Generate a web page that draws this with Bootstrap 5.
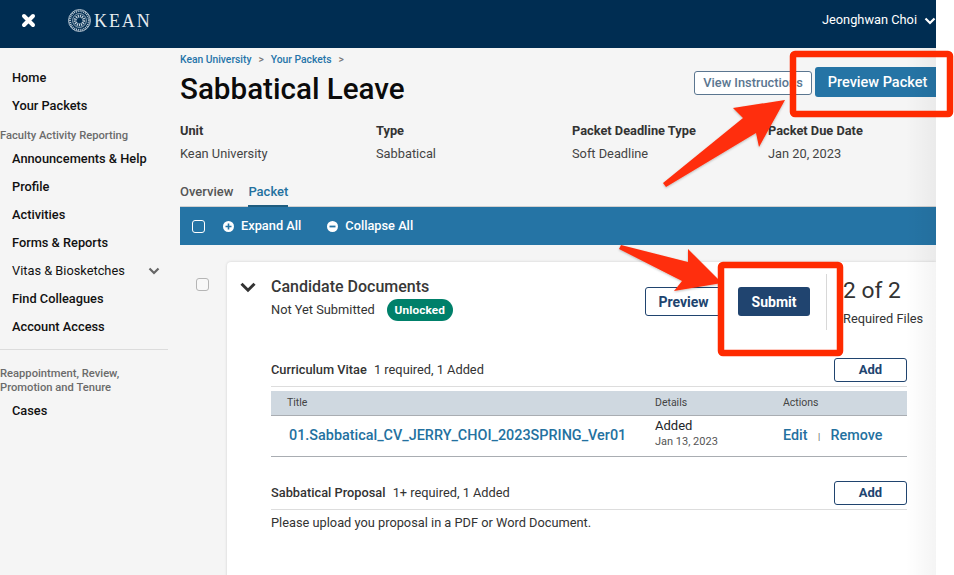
<!DOCTYPE html>
<html lang="en">

<head>
  <meta charset="UTF-8" />
  <meta name="viewport" content="width=device-width, initial-scale=1.0" />
  <title>Sabbatical Leave - Packet</title>
  <link href="https://cdn.jsdelivr.net/npm/bootstrap@5.3.3/dist/css/bootstrap.min.css" rel="stylesheet" />
  <style>
    html, body { height: 100%; overflow: hidden; background: #fff; }

    body {
      font-family: Roboto, "Liberation Sans", sans-serif;
      font-size: 12.8px;
      line-height: 16px;
      color: #333;
    }

    .app-shell {
      width: 936px;
      height: 575px;
      overflow: hidden;
      background: #f5f5f5;
      position: relative;
    }

    .edge-fade {
      position: absolute;
      top: 48px;
      right: 0;
      bottom: 0;
      width: 30px;
      background: linear-gradient(to right, rgba(0, 0, 0, 0), rgba(0, 0, 0, .045));
      pointer-events: none;
    }

    .top-bar { height: 48px; background: #002d52; padding: 0 0 7px 21px; color: #fff; }
    .brand-name { font-family: "Liberation Serif", serif; font-size: 18px; letter-spacing: 1.9px; color: #e6ebef; margin-left: 3px; line-height: 24px; }
    .seal { margin-left: 32px; }
    .user-name { font-size: 12.8px; margin-right: 7px; margin-top: -2px; }

    .side-nav { width: 168px; padding-top: 16px; flex-shrink: 0; }
    .side-link {
      display: flex;
      align-items: center;
      justify-content: space-between;
      height: 28px;
      padding: 0 8px 0 12px;
      color: #111;
      font-size: 12.8px;
      font-weight: 500;
      text-decoration: none;
    }
    .side-head { font-size: 11.2px; line-height: 14px; font-weight: 500; color: #6b6b6b; }
    .side-head-first { margin: 9px 0 2px; }
    .side-rule { margin: 8px 0 17px; border-top: 1px solid #dcdcdc; opacity: 1; }
    .side-link-last { margin-top: 2px; }

    .main-col { width: 756px; margin-left: 12px; flex-shrink: 0; }

    .crumbs { margin: 5px 0 0; font-size: 10.3px; line-height: 13px; font-weight: 500; --bs-breadcrumb-divider: ">"; --bs-breadcrumb-margin-bottom: 0; --bs-breadcrumb-item-padding-x: 7px; }
    .crumbs a { color: #2574a9; text-decoration: none; }
    .crumbs .breadcrumb-item + .breadcrumb-item::before { color: #777; }
    .page-title { font-size: 29.6px; line-height: 36px; font-weight: 500; color: #0b0b0b; margin: 5px 0 0; }

    .head-actions { margin-top: 19px; }
    .btn-outline-slate { border: 1px solid #5b7690; background: #fff; color: #5b7690; font-size: 12.8px; font-weight: 500; height: 24px; width: 118px; padding: 0; border-radius: 3px; margin-top: 4px; margin-right: 3px; }
    .btn-preview { background: #2574a5; color: #fff; font-size: 14.5px; font-weight: 500; height: 30px; width: 121px; padding: 2px 0 0 4px; border: 0; border-radius: 3px 0 0 3px; }

    .meta-row { margin-top: 16px; }
    .meta-col { flex: 0 0 196px; }
    .meta-col:last-child { flex-basis: 168px; }
    .meta-label { font-size: 12.8px; font-weight: 700; color: #333; line-height: 16px; }
    .meta-value { font-size: 12.8px; color: #444; line-height: 16px; margin-top: 7px; }

    .tab-row { margin-top: 21px; height: 24px; border-bottom: 1px solid #d0d0d0; font-size: 13px; font-weight: 500; gap: 15px; }
    .tab-row a { text-decoration: none; color: #555; display: block; height: 24px; padding-top: 1px; }
    .tab-row a.on { color: #24719f; border-bottom: 2px solid #1f5d80; }

    .tool-bar { height: 38px; background: #2574a5; color: #fff; padding-left: 12px; font-size: 12.8px; font-weight: 500; }
    .box-check { width: 13px; height: 13px; border: 1.5px solid #fff; border-radius: 3px; flex-shrink: 0; }
    .tool-item { margin-left: 18px; gap: 7px; }
    .tool-item + .tool-item { margin-left: 26px; }

    .doc-zone { padding: 17px 0 0 16px; }
    .row-check { width: 13px; height: 13px; border: 1.5px solid #b5b5b5; border-radius: 3px; background: #f8f8f8; margin-top: 16px; flex-shrink: 0; }
    .doc-card { width: 709px; height: 400px; margin-left: 18px; background: #fff; border-radius: 4px 0 0 0; box-shadow: 0 0 3px rgba(0, 0, 0, .16); padding-right: 29px; }
    .doc-head { height: 96px; padding: 12px 0 0 13px; margin-right: -29px; }
    .doc-title { font-size: 16px; line-height: 22px; font-weight: 500; color: #383838; margin: 2px 0 0 15px; }
    .doc-sub { margin-left: 15px; margin-top: 1px; font-size: 12.8px; }
    .state-pill { background: #00806a; font-size: 11.8px; font-weight: 700; letter-spacing: .1px; height: 22px; width: 66px; padding: 0; line-height: 22px; margin-left: 12px; border-radius: 11px; }
    .btn-line { border: 1px solid #20446f; background: #fff; color: #20446f; font-size: 13px; font-weight: 700; padding: 0; border-radius: 3px; }
    .btn-solid { background: #20446f; color: #fff; font-weight: 700; padding: 0; border: 0; border-radius: 3px; }
    .head-btn { height: 29px; margin-top: 13px; padding-top: 1px; font-size: 14px; }
    .head-btn-first { width: 77px; }
    .head-btn-second { width: 72px; margin-left: 16px; }
    .doc-divider { width: 1px; height: 56px; background: #d8d8d8; margin: 0 16px; }
    .doc-stat { width: 93px; padding-top: 1px; }
    .doc-count { font-size: 22.8px; line-height: 32px; color: #333; }
    .doc-req { font-size: 12.8px; margin-top: 4px; line-height: 16px; white-space: nowrap; }

    .doc-body { margin-left: 44px; }
    .req-line { height: 29px; border-bottom: 1px solid #ddd; font-size: 12.8px; padding-bottom: 4px; }
    .req-line b { font-weight: 500; margin-right: 4px; }
    .btn-add { width: 73px; height: 24px; }
    .file-table { margin: 4px 0 24px; table-layout: fixed; width: 636px; font-size: 12.8px; --bs-table-bg: transparent; }
    .file-table th { background: #cfd8e0; font-weight: 400; font-size: 10.5px; height: 24px; padding: 0; border-bottom: 1px solid #a9adb2; color: #444; vertical-align: middle; }
    .file-table td { height: 41px; padding: 0; border-bottom: 1px solid #a9adb2; vertical-align: middle; }
    .file-table td.file-cell { padding-left: 18px; }
    .file-table td.added-cell { padding-bottom: 5px; }
    .file-link { color: #24719f; font-size: 14.4px; font-weight: 500; text-decoration: none; white-space: nowrap; }
    .act-link { color: #24719f; font-size: 14.3px; font-weight: 500; text-decoration: none; }
    .act-sep { color: #555; font-size: 9px; margin: 0 10.5px; }
    .small-date { font-size: 11px; line-height: 14px; color: #555; margin-top: 2px; }
    .add-text { font-size: 13px; line-height: 15px; }
    .upload-note { margin: 5px 0 0; }

    .callouts { position: absolute; left: 0; top: 0; pointer-events: none; }
  </style>
</head>

<body>
  <div class="app-shell">
    <header class="top-bar d-flex align-items-center">
      <svg width="15" height="15" viewBox="0 0 15 15">
        <path d="M3 3l9 9M12 3l-9 9" stroke="#fff" stroke-width="4" stroke-linecap="round" />
      </svg>
      <svg class="seal" width="23" height="23" viewBox="0 0 24 24" fill="none" stroke="#c5d2dc">
        <circle cx="12" cy="12" r="11.4" stroke-width="1" />
        <circle cx="12" cy="12" r="9.8" stroke-width="2" stroke-dasharray="1 1" />
        <circle cx="12" cy="12" r="7.2" stroke-width=".8" />
        <circle cx="12" cy="12" r="4.5" stroke-width="3" stroke-dasharray="1.2 .9" />
      </svg>
      <span class="brand-name">KEAN</span>
      <div class="ms-auto d-flex align-items-center">
        <span class="user-name">Jeonghwan Choi</span>
        <svg width="12" height="8" viewBox="0 0 12 8" fill="none">
          <path d="M1.5 1.5L6 6l4.5-4.5" stroke="#fff" stroke-width="2.2" />
        </svg>
      </div>
    </header>

    <div class="d-flex">
      <nav class="side-nav">
        <a class="side-link" href="#">Home</a>
        <a class="side-link" href="#">Your Packets</a>
        <div class="side-head side-head-first">Faculty Activity Reporting</div>
        <a class="side-link" href="#">Announcements &amp; Help</a>
        <a class="side-link" href="#">Profile</a>
        <a class="side-link" href="#">Activities</a>
        <a class="side-link" href="#">Forms &amp; Reports</a>
        <a class="side-link fw-normal" href="#">Vitas &amp; Biosketches
          <svg width="12" height="8" viewBox="0 0 12 8" fill="none">
            <path d="M1.5 1.5L6 6l4.5-4.5" stroke="#666" stroke-width="2.2" />
          </svg>
        </a>
        <a class="side-link" href="#">Find Colleagues</a>
        <a class="side-link" href="#">Account Access</a>
        <hr class="side-rule" />
        <div class="side-head">Reappointment, Review,<br />Promotion and Tenure</div>
        <a class="side-link side-link-last" href="#">Cases</a>
      </nav>

      <main class="main-col">
        <div class="d-flex justify-content-between">
          <div>
            <ol class="breadcrumb crumbs">
              <li class="breadcrumb-item"><a href="#">Kean University</a></li>
              <li class="breadcrumb-item"><a href="#">Your Packets</a></li>
              <li class="breadcrumb-item"></li>
            </ol>
            <h1 class="page-title">Sabbatical Leave</h1>
          </div>
          <div class="head-actions d-flex align-items-start">
            <button type="button" class="btn btn-outline-slate">View Instructions</button>
            <button type="button" class="btn btn-preview">Preview Packet</button>
          </div>
        </div>

        <div class="meta-row d-flex">
          <div class="meta-col">
            <div class="meta-label">Unit</div>
            <div class="meta-value">Kean University</div>
          </div>
          <div class="meta-col">
            <div class="meta-label">Type</div>
            <div class="meta-value">Sabbatical</div>
          </div>
          <div class="meta-col">
            <div class="meta-label">Packet Deadline Type</div>
            <div class="meta-value">Soft Deadline</div>
          </div>
          <div class="meta-col">
            <div class="meta-label">Packet Due Date</div>
            <div class="meta-value">Jan 20, 2023</div>
          </div>
        </div>

        <div class="tab-row d-flex">
          <a href="#">Overview</a>
          <a class="on" href="#">Packet</a>
        </div>

        <div class="tool-bar d-flex align-items-center">
          <span class="box-check"></span>
          <span class="tool-item d-flex align-items-center">
            <svg width="11" height="11" viewBox="0 0 11 11">
              <circle cx="5.5" cy="5.5" r="5.5" fill="#fff" />
              <path d="M5.5 2.5v6M2.5 5.5h6" stroke="#2574a5" stroke-width="1.6" />
            </svg>
            Expand All
          </span>
          <span class="tool-item d-flex align-items-center">
            <svg width="11" height="11" viewBox="0 0 11 11">
              <circle cx="5.5" cy="5.5" r="5.5" fill="#fff" />
              <path d="M2.5 5.5h6" stroke="#2574a5" stroke-width="1.8" />
            </svg>
            Collapse All
          </span>
        </div>

        <div class="doc-zone d-flex">
          <span class="row-check"></span>
          <section class="doc-card">
            <div class="doc-head d-flex">
              <svg class="mt-2" width="16" height="11" viewBox="0 0 16 11" fill="none">
                <path d="M1.5 1.8L8 8.2l6.5-6.4" stroke="#333" stroke-width="3" />
              </svg>
              <div>
                <div class="doc-title">Candidate Documents</div>
                <div class="doc-sub d-flex align-items-center">Not Yet Submitted
                  <span class="badge state-pill">Unlocked</span>
                </div>
              </div>
              <div class="ms-auto d-flex align-items-start">
                <button type="button" class="btn btn-line head-btn head-btn-first">Preview</button>
                <button type="button" class="btn btn-solid head-btn head-btn-second">Submit</button>
                <div class="doc-divider"></div>
                <div class="doc-stat">
                  <div class="doc-count">2 of 2</div>
                  <div class="doc-req">Required Files</div>
                </div>
              </div>
            </div>

            <div class="doc-body">
              <div class="req-line d-flex align-items-center justify-content-between">
                <span><b>Curriculum Vitae</b> 1 required, 1 Added</span>
                <button type="button" class="btn btn-line btn-add">Add</button>
              </div>
              <table class="table file-table">
                <colgroup>
                  <col style="width: 384px" />
                  <col style="width: 128px" />
                  <col />
                </colgroup>
                <thead>
                  <tr>
                    <th class="ps-3">Title</th>
                    <th>Details</th>
                    <th>Actions</th>
                  </tr>
                </thead>
                <tbody>
                  <tr>
                    <td class="file-cell"><a class="file-link" href="#">01.Sabbatical_CV_JERRY_CHOI_2023SPRING_Ver01</a></td>
                    <td class="added-cell">
                      <div class="add-text">Added</div>
                      <div class="small-date">Jan 13, 2023</div>
                    </td>
                    <td class="text-nowrap">
                      <a class="act-link" href="#">Edit</a><span class="act-sep">|</span><a class="act-link" href="#">Remove</a>
                    </td>
                  </tr>
                </tbody>
              </table>
              <div class="req-line d-flex align-items-center justify-content-between">
                <span><b>Sabbatical Proposal</b> 1+ required, 1 Added</span>
                <button type="button" class="btn btn-line btn-add">Add</button>
              </div>
              <p class="upload-note">Please upload you proposal in a PDF or Word Document.</p>
            </div>
          </section>
        </div>
      </main>
    </div>
    <div class="edge-fade"></div>
  </div>

  <svg class="callouts" width="954" height="575" viewBox="0 0 954 575">
    <defs>
      <filter id="soft" x="-10%" y="-10%" width="120%" height="120%">
        <feDropShadow dx="0" dy="1" stdDeviation="1" flood-color="#000" flood-opacity=".25" />
      </filter>
    </defs>
    <g fill="#ff2d0a" filter="url(#soft)">
      <polygon points="785,100 733,108 743,118 663,183 666,187 756,133 759,147" />
      <polygon points="722,283 688,249 688,262 621,245 619,249 682,281 674,291" />
    </g>
    <rect x="793" y="54" width="157" height="60" rx="2" fill="none" stroke="#ff2a00" stroke-width="6.5" />
    <rect x="721" y="265" width="119" height="88" rx="2" fill="none" stroke="#ff2a00" stroke-width="6.5" />
  </svg>

  <script src="https://cdn.jsdelivr.net/npm/bootstrap@5.3.3/dist/js/bootstrap.bundle.min.js"></script>
</body>
</html>
